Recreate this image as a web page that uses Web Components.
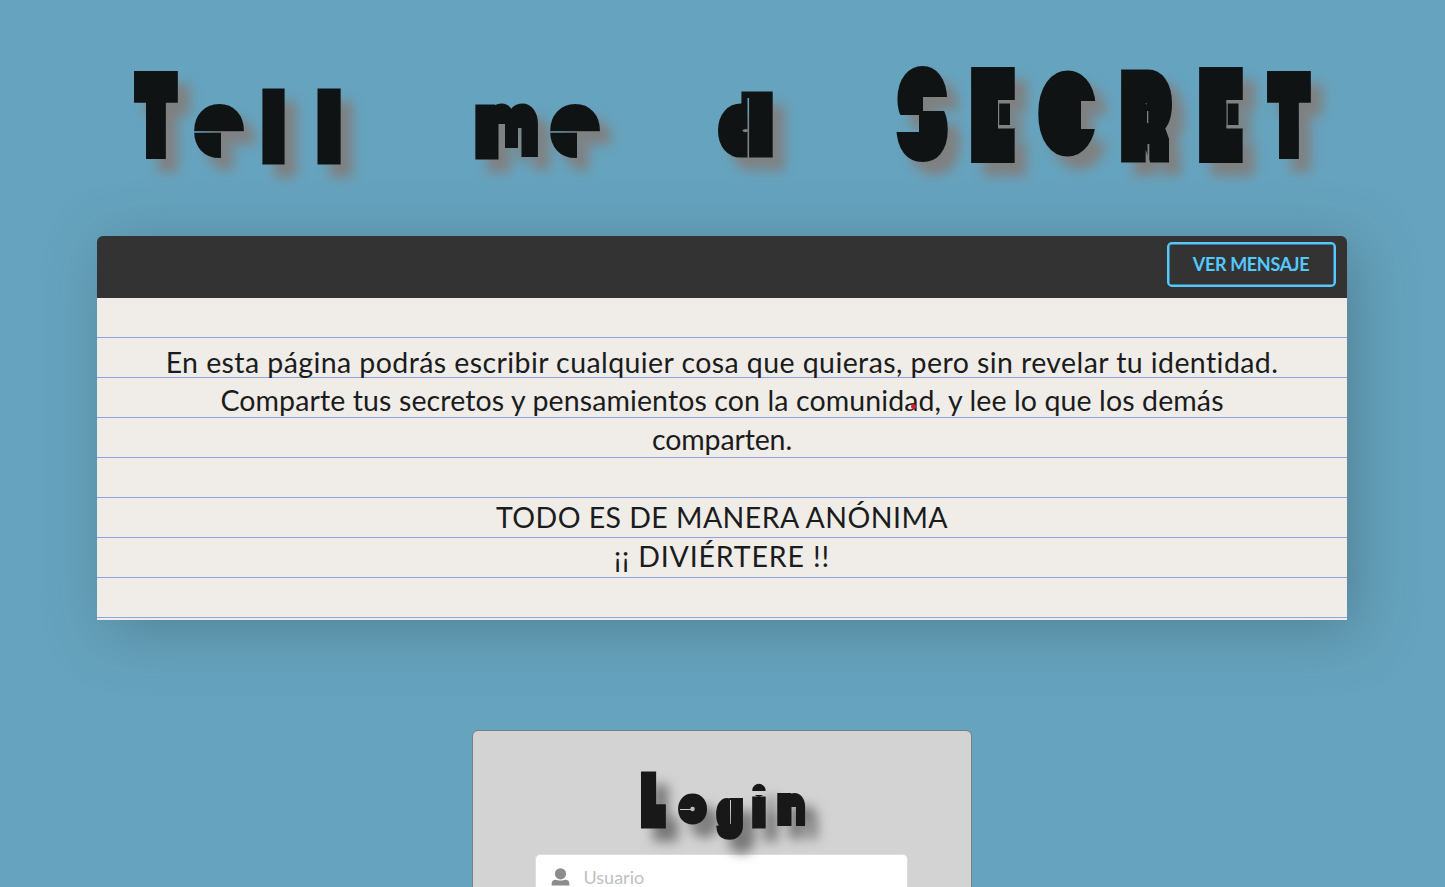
<!DOCTYPE html>
<html lang="es">
<head>
<meta charset="utf-8">
<title>Tell me a SECRET</title>
<style>
html,body{margin:0;height:100%;overflow:hidden;background:#66a3be}
</style>
</head>
<body>
<secret-page></secret-page>
<script>
const pen = document.createElement('canvas').getContext('2d');

/* Poster lettering: each glyph is fitted to a box [char, left, top, right, bottom, stroke].
   "cuts" are [x, y, width, height] stencil gaps taken out of the lettering. */
class PosterTitle extends HTMLElement {
  connectedCallback() {
    const w = this.getAttribute('width'), h = this.getAttribute('height');
    const glyphs = JSON.parse(this.getAttribute('glyphs'));
    const cuts = JSON.parse(this.getAttribute('cuts') || '[]');
    const spans = glyphs.map(g => {
      if (g === ' ') return ' ';
      const [c, l, t, r, b, s] = g;
      pen.font = '900 200px Inter';
      const m = pen.measureText(c);
      const up = m.actualBoundingBoxAscent, down = m.actualBoundingBoxDescent;
      const left = -m.actualBoundingBoxLeft, right = m.actualBoundingBoxRight;
      /* the stroke is squeezed sideways together with its glyph */
      const ky = (b - t - s) / (up + down), kx = (r - l) / (right - left + s / ky);
      return `<tspan x="${l + s / 2 * kx / ky - left * kx}" y="${b - s / 2 - down * ky}" font-size="${200 * ky}" stroke-width="${s}" textLength="${m.width * kx}" lengthAdjust="spacingAndGlyphs">${c}</tspan>`;
    }).join('');
    this.attachShadow({mode: 'open'}).innerHTML = `
      <style>
        :host{display:block;width:${w}px;height:${h}px}
        svg{display:block;overflow:visible;filter:drop-shadow(12px 13px 6px var(--shade,gray))}
        text{font-family:Inter,sans-serif;font-weight:900;fill:var(--ink,#101314);stroke:var(--ink,#101314)}
      </style>
      <svg width="${w}" height="${h}" role="heading">
        <mask id="stencil" maskUnits="userSpaceOnUse" x="0" y="0" width="${w}" height="${h}">
          <rect width="${w}" height="${h}" fill="#fff"/>
          ${cuts.map(([x, y, cw, ch]) => `<rect x="${x}" y="${y}" width="${cw}" height="${ch}" fill="#000"/>`).join('')}
        </mask>
        <g mask="url(#stencil)"><text>${spans}</text></g>
      </svg>`;
  }
}
customElements.define('poster-title', PosterTitle);

class NoteLine extends HTMLElement {
  connectedCallback() {
    const text = this.textContent, w = +this.getAttribute('width') || 0;
    pen.font = '400 28.5px Lato';
    const gap = w ? (w - pen.measureText(text).width) / text.length : 0;
    this.attachShadow({mode: 'open'}).innerHTML = `
      <style>:host{display:block;height:38.9px;line-height:38.9px;text-align:center;white-space:nowrap;letter-spacing:${gap}px}</style><slot></slot>`;
  }
}
customElements.define('note-line', NoteLine);

class OutlineButton extends HTMLElement {
  connectedCallback() {
    this.attachShadow({mode: 'open'}).innerHTML = `
      <style>
        :host{display:block}
        button{display:block;box-sizing:border-box;width:169px;height:45px;padding:0 1px 2px 0;border:2px solid #54c8ff;box-shadow:inset 0 0 0 .5px #54c8ff;border-radius:5px;background:none;color:#54c8ff;font:700 18px/38px Lato,sans-serif;letter-spacing:-.35px;white-space:nowrap}
      </style><button><slot></slot></button>`;
  }
}
customElements.define('outline-button', OutlineButton);

class NoteCard extends HTMLElement {
  connectedCallback() {
    this.attachShadow({mode: 'open'}).innerHTML = `
      <style>
        :host{display:block;width:1250px;height:384px;border-radius:6px 6px 0 0;box-shadow:10px 10px 60px rgba(55,85,92,.42)}
        header{box-sizing:border-box;height:62px;background:#333;border-radius:6px 6px 0 0;display:flex;justify-content:flex-end;padding:6px 11px 0 0}
        section{box-sizing:border-box;position:relative;height:322px;padding-top:44.5px;background:repeating-linear-gradient(#f0ede8 0 39px,#8ca6dc 39px 40px);font:400 28.5px Lato,sans-serif;color:#1b1c1d}
        i{position:absolute;left:814px;top:106px;width:5px;height:5px;border-radius:50%;background:#e01b24}
      </style>
      <header><slot name="action"></slot></header>
      <section><slot></slot><i></i></section>`;
  }
}
customElements.define('note-card', NoteCard);

class IconField extends HTMLElement {
  connectedCallback() {
    this.attachShadow({mode: 'open'}).innerHTML = `
      <style>
        :host{box-sizing:border-box;display:flex;align-items:center;width:373px;height:47px;margin-right:2px;padding-left:15px;gap:14px;background:#fff;border:1px solid #dededf;border-radius:5px;color:#bfbfbf;font:400 18px Lato,sans-serif}
        svg{display:block;margin-top:-1px}
        span{margin-top:-2px}
      </style>
      <svg width="19" height="18" viewBox="0 0 19 18" fill="#8c8c8c"><circle cx="9.5" cy="5.8" r="5.6"/><path d="M.6 16.9v-1.2c0-2.4 1.6-4 4.1-4 1.4 0 2.4.9 4.8.9s3.4-.9 4.8-.9c2.5 0 4.1 1.6 4.1 4v1.2q0 .7-.8.7H1.4q-.8 0-.8-.7z"/></svg>
      <span><slot></slot></span>`;
  }
}
customElements.define('icon-field', IconField);

class LoginCard extends HTMLElement {
  connectedCallback() {
    this.attachShadow({mode: 'open'}).innerHTML = `
      <style>
        :host{box-sizing:border-box;display:flex;flex-direction:column;align-items:center;width:500px;height:420px;background:#d3d3d3;border:1px solid #7c7f82;border-radius:6px}
      </style><slot></slot>`;
  }
}
customElements.define('login-card', LoginCard);

class SecretPage extends HTMLElement {
  connectedCallback() {
    const title = [['T',134,71,178,159,16],['e',194,104,244,158,16],['l',262,88,285,164,5],['l',317,88,341,164,5],' ',
      ['m',475,103,538,159,11],['e',550,104,600,158,16],' ',['d',718,92,773,158,19],' ',
      ['S',896,66,948,162,18],['E',971,67,1015,163,22],['C',1038,71,1096,156,25],['R',1121,69,1174,162,17],['E',1199,67,1243,163,22],['T',1267,71,1311,159,16]];
    const eCuts = x => [[x,100,16,3.5],[x,125,16,3.5],[x + 12,100,5,28],[x,100,1.2,28]];
    const cuts = [[190,131.2,60,1.5],[221,132,30,34],[546,131.2,60,1.5],[577,132,30,34],[747.5,98,1.6,60],
      [498.5,124,6.5,40],[505,148,14,16],[518,128,3.5,36],[521,157,20,6],
      [923,97,27,14],[890,115,29,17],...eCuts(998),...eCuts(1226.5),[1081,101,18,28],[1147,111,1.3,12],[1147.5,144,1.8,19],[1169,122,10,44]];
    const login = [['L',168,40,193,97,15],['o',205,63,234,94,13],['g',243,66,270,108,8],['i',279,52,293,97,3],['n',304,62,332,95,8]];
    this.attachShadow({mode: 'open'}).innerHTML = `
      <style>
        :host{display:flex;flex-direction:column;align-items:center;width:1445px;height:887px;overflow:hidden}
        note-card{margin-right:1px}
        login-card{margin:110px 1px 0 0;flex:none}
        .login{--ink:#181818;--shade:#777}
      </style>
      <poster-title width="1445" height="236" glyphs='${JSON.stringify(title)}' cuts='${JSON.stringify(cuts)}'></poster-title>
      <note-card>
        <outline-button slot="action">VER MENSAJE</outline-button>
        <note-line width="1115">En esta página podrás escribir cualquier cosa que quieras, pero sin revelar tu identidad.</note-line>
        <note-line width="1006">Comparte tus secretos y pensamientos con la comunidad, y lee lo que los demás</note-line>
        <note-line width="140">comparten.</note-line>
        <note-line></note-line>
        <note-line width="454">TODO ES DE MANERA ANÓNIMA</note-line>
        <note-line width="216">¡¡ DIVIÉRTERE !!</note-line>
      </note-card>
      <login-card>
        <poster-title class="login" width="498" height="123" glyphs='${JSON.stringify(login)}' cuts='[[207,78,12,1],[257,69,1,24],[276,60,20,4],[318.5,76,4.5,24]]'></poster-title>
        <icon-field>Usuario</icon-field>
      </login-card>`;
  }
}
customElements.define('secret-page', SecretPage);
</script>
</body>
</html>
